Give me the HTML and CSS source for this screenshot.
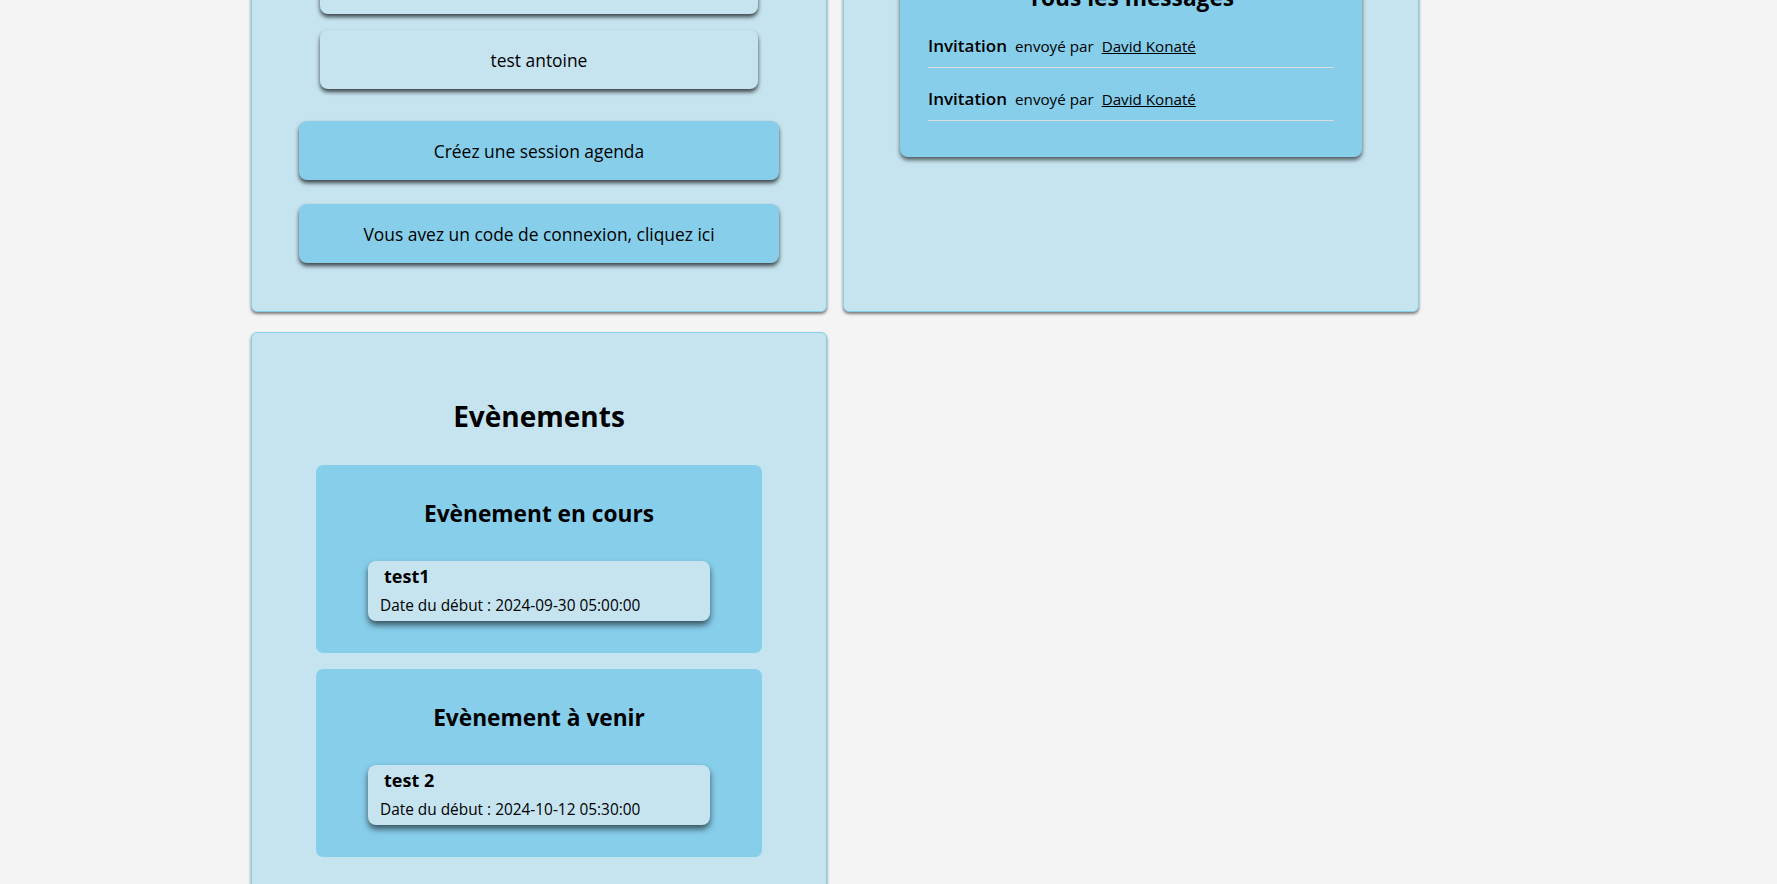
FILE: index.html
```html
<!DOCTYPE html>
<html lang="fr">
<head>
<meta charset="utf-8">
<title>Agenda</title>
<link rel="stylesheet" href="styles.css">
</head>
<body>
<main class="dashboard">
  <section class="card">
    <h1 class="card-title">Vos sessions agenda</h1>
    <div class="session-list">
      <div class="session">test david</div>
      <div class="session">test antoine</div>
    </div>
    <div class="actions">
      <button class="action">Créez une session agenda</button>
      <button class="action">Vous avez un code de connexion, cliquez ici</button>
    </div>
  </section>

  <section class="card">
    <h1 class="card-title">Messagerie</h1>
    <div class="messages">
      <h2 class="messages-title">Tous les messages</h2>
      <ul class="message-list">
        <li class="message"><span class="msg-type">Invitation</span><span class="msg-by">envoyé par</span><a class="msg-from" href="#">David Konaté</a></li>
        <li class="message"><span class="msg-type">Invitation</span><span class="msg-by">envoyé par</span><a class="msg-from" href="#">David Konaté</a></li>
      </ul>
    </div>
  </section>

  <section class="card events-card">
    <h1 class="card-title">Evènements</h1>
    <div class="event-group">
      <h2 class="group-title">Evènement en cours</h2>
      <div class="event">
        <h3 class="event-name">test1</h3>
        <p class="event-date">Date du début : 2024-09-30 05:00:00</p>
      </div>
    </div>
    <div class="event-group">
      <h2 class="group-title">Evènement à venir</h2>
      <div class="event">
        <h3 class="event-name">test 2</h3>
        <p class="event-date">Date du début : 2024-10-12 05:30:00</p>
      </div>
    </div>
  </section>
</main>
</body>
</html>
```

FILE: styles.css
```css
html {
  overflow: hidden;
}

body {
  margin: 0;
  background: #f4f4f4;
  color: #000;
  font-family: "Open Sans", "Noto Sans", sans-serif;
  font-size: 15.2px;
}

.dashboard {
  display: grid;
  grid-template-columns: 576px 576px;
  column-gap: 16px;
  row-gap: 20px;
  padding-left: 251px;
  margin-top: -178px;
  align-items: stretch;
}

.card {
  display: flex;
  flex-direction: column;
  background: #c6e4f0;
  border: 1px solid #87ceeb;
  border-radius: 6px;
  box-shadow: 0 2px 3px rgba(0, 0, 0, 0.5);
  padding: 20px 0;
}

.card-title {
  margin: 45px 0 31px;
  font-size: 28px;
  line-height: 36px;
  font-weight: 700;
  text-align: center;
}

/* sessions */
.session-list {
  display: flex;
  flex-direction: column;
  gap: 16px;
  margin: 0 68px;
}

.session {
  height: 59px;
  display: flex;
  align-items: center;
  justify-content: center;
  background: #c6e4f0;
  border-radius: 8px;
  font-size: 17.4px;
  box-shadow: 0 3px 4px rgba(0, 0, 0, 0.7);
}

.actions {
  display: flex;
  flex-direction: column;
  gap: 24px;
  margin: 32px 47px 28px;
}

.action {
  height: 59px;
  border: none;
  border-radius: 8px;
  background: #87ceeb;
  color: #000;
  font-family: inherit;
  font-size: 17.4px;
  box-shadow: 0 3px 4px rgba(0, 0, 0, 0.7);
  cursor: pointer;
}

/* messages */
.messages {
  margin: 0 56px;
  padding: 28px 28px 27px;
  background: #87ceeb;
  border-radius: 8px;
  box-shadow: 0 3px 4px rgba(0, 0, 0, 0.6);
}

.messages-title {
  margin: 0 0 11px;
  font-size: 22.7px;
  line-height: 30px;
  text-align: center;
}

.message-list {
  list-style: none;
  margin: 0;
  padding: 0;
}

.message {
  display: flex;
  align-items: baseline;
  gap: 8px;
  padding: 10px 0 9px;
  margin-bottom: 9px;
  line-height: 24px;
  border-bottom: 1px solid #d8dde0;
}

.msg-type {
  font-size: 17px;
  font-weight: 600;
}

.msg-from {
  color: #000;
  text-decoration: underline;
}

/* events */
.event-group {
  margin: 0 64px 16px;
  padding: 34px 52px 32px;
  background: #87ceeb;
  border-radius: 7px;
}

.group-title {
  margin: 0 0 32px;
  font-size: 22.7px;
  line-height: 30px;
  text-align: center;
}

.event {
  display: flex;
  flex-direction: column;
  padding: 3px 0 5px;
  background: #c6e4f0;
  border-radius: 8px;
  box-shadow: 0 4px 6px rgba(0, 0, 0, 0.6);
}

.event-name {
  margin: 0 0 8px;
  padding: 0 16px;
  font-size: 18px;
  line-height: 24px;
  font-weight: 700;
}

.event-date {
  margin: 0;
  padding: 0 12px;
  font-size: 15.4px;
  line-height: 20px;
}
```
